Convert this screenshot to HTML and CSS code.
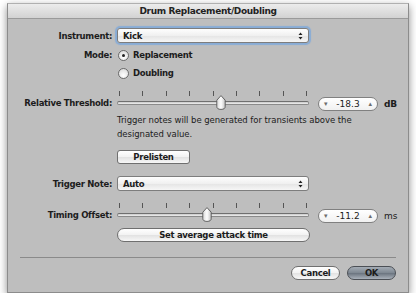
FILE: index.html
```html
<!DOCTYPE html>
<html lang="en">
<head>
    <meta charset="UTF-8">
    <title>Drum Replacement/Doubling</title>
    <link rel="stylesheet" href="styles.css">
</head>
<body>
    <div class="window">
        <header class="titlebar">Drum Replacement/Doubling</header>

        <main class="content">
            <!-- Instrument -->
            <div class="row row-instrument">
                <label class="label">Instrument:</label>
                <div class="popup focused">
                    <span class="popup-value">Kick</span>
                    <svg class="popup-arrows" width="5" height="8" viewBox="0 0 5 8">
                        <path d="M0.5 3 L2.5 0.5 L4.5 3 Z M0.5 5 L2.5 7.5 L4.5 5 Z" fill="#222"/>
                    </svg>
                </div>
            </div>

            <!-- Mode -->
            <div class="row row-mode">
                <label class="label">Mode:</label>
                <span class="radio checked"></span>
                <span class="radio-text">Replacement</span>
            </div>
            <div class="row row-mode2">
                <span class="label"></span>
                <span class="radio"></span>
                <span class="radio-text">Doubling</span>
            </div>

            <!-- Relative threshold -->
            <div class="row row-slider row-threshold">
                <label class="label">Relative Threshold:</label>
                <div class="slider">
                    <div class="ticks">
                        <i></i><i></i><i></i><i></i><i></i><i></i><i></i><i></i><i></i>
                    </div>
                    <div class="track"></div>
                    <svg class="knob" style="left: 99px" width="10" height="15" viewBox="0 0 10 15">
                        <defs>
                            <linearGradient id="kg1" x1="0" y1="0" x2="1" y2="0">
                                <stop offset="0" stop-color="#d8d8d8"/>
                                <stop offset="0.5" stop-color="#fdfdfd"/>
                                <stop offset="1" stop-color="#c4c4c4"/>
                            </linearGradient>
                        </defs>
                        <path d="M5 0.6 L9.2 5.2 V11.5 Q9.2 14.4 5 14.4 Q0.8 14.4 0.8 11.5 V5.2 Z" fill="url(#kg1)" stroke="#555" stroke-width="0.9"/>
                    </svg>
                </div>
                <div class="stepper">
                    <span class="step-arrow">&#9662;</span>
                    <span class="step-value">-18.3</span>
                    <span class="step-arrow">&#9652;</span>
                </div>
                <span class="unit unit-bold">dB</span>
            </div>

            <p class="help">Trigger notes will be generated for transients above the<br>designated value.</p>

            <div class="row row-prelisten">
                <span class="label"></span>
                <button class="btn btn-square">Prelisten</button>
            </div>

            <!-- Trigger note -->
            <div class="row row-trigger">
                <label class="label">Trigger Note:</label>
                <div class="popup">
                    <span class="popup-value">Auto</span>
                    <svg class="popup-arrows" width="5" height="8" viewBox="0 0 5 8">
                        <path d="M0.5 3 L2.5 0.5 L4.5 3 Z M0.5 5 L2.5 7.5 L4.5 5 Z" fill="#222"/>
                    </svg>
                </div>
            </div>

            <!-- Timing offset -->
            <div class="row row-slider row-timing">
                <label class="label">Timing Offset:</label>
                <div class="slider">
                    <div class="ticks">
                        <i></i><i></i><i></i><i></i><i></i><i></i><i></i><i></i><i></i>
                    </div>
                    <div class="track"></div>
                    <svg class="knob" style="left: 85px" width="10" height="15" viewBox="0 0 10 15">
                        <defs>
                            <linearGradient id="kg2" x1="0" y1="0" x2="1" y2="0">
                                <stop offset="0" stop-color="#d8d8d8"/>
                                <stop offset="0.5" stop-color="#fdfdfd"/>
                                <stop offset="1" stop-color="#c4c4c4"/>
                            </linearGradient>
                        </defs>
                        <path d="M5 0.6 L9.2 5.2 V11.5 Q9.2 14.4 5 14.4 Q0.8 14.4 0.8 11.5 V5.2 Z" fill="url(#kg2)" stroke="#555" stroke-width="0.9"/>
                    </svg>
                </div>
                <div class="stepper">
                    <span class="step-arrow">&#9662;</span>
                    <span class="step-value">-11.2</span>
                    <span class="step-arrow">&#9652;</span>
                </div>
                <span class="unit">ms</span>
            </div>

            <div class="row row-attack">
                <span class="label"></span>
                <button class="btn btn-pill btn-wide">Set average attack time</button>
            </div>

            <hr class="separator">

            <footer class="actions">
                <button class="btn btn-pill btn-action">Cancel</button>
                <button class="btn btn-pill btn-action btn-default">OK</button>
            </footer>
        </main>
    </div>
</body>
</html>
```

FILE: styles.css
```css
/* Global styles */
body {
    margin: 0;
    padding: 0;
    background: #fff;
    font-family: 'DejaVu Sans', sans-serif;
    font-size: 8.5px;
    color: #1c1c1c;
}

/* Window frame */
.window {
    position: relative;
    margin: 3px 0 0 7px;
    width: 400px;
    height: 288px;
    background: #bebebe;
    border: 1px solid #8c8c8c;
    border-top-color: #b0b0b0;
    box-shadow: 0px 3px 8px rgba(0, 0, 0, 0.45);
}

.titlebar {
    height: 14px;
    line-height: 14px;
    text-align: center;
    font-weight: bold;
    font-size: 9px;
    letter-spacing: -0.35px;
    color: #222;
    background: linear-gradient(#ececec, #d2d2d2);
    border-bottom: 1px solid #9a9a9a;
}

.content {
    padding-top: 9px;
}

/* Bold text shared by labels and controls */
.label,
.popup,
.radio-text,
.unit-bold,
.btn {
    font-weight: bold;
    letter-spacing: -0.3px;
}

/* Form rows */
.row {
    display: flex;
    align-items: center;
}

.label {
    width: 104px;
    margin-right: 5px;
    text-align: right;
    white-space: nowrap;
}

.row-instrument { height: 15px; }
.row-mode { height: 14px; margin-top: 5px; }
.row-mode2 { height: 14px; margin-top: 4px; }

/* Popup menus */
.popup {
    box-sizing: border-box;
    width: 192px;
    height: 15px;
    display: flex;
    align-items: center;
    justify-content: space-between;
    padding: 0 5px 0 5px;
    border: 1px solid #7d7d7d;
    border-radius: 3px;
    background: linear-gradient(#fefefe, #f0f0f0 50%, #e4e4e4 51%, #f6f6f6);
}

.popup.focused {
    box-shadow: 0 0 1px 2px #88acd6;
}

/* Radio buttons */
.radio {
    box-sizing: border-box;
    width: 11px;
    height: 11px;
    margin: 0 4px 0 1px;
    border: 1px solid #6a6a6a;
    border-radius: 50%;
    background: radial-gradient(circle at 50% 70%, #ffffff, #d6d6d6);
    display: flex;
    align-items: center;
    justify-content: center;
}

.radio.checked::after {
    content: "";
    width: 3px;
    height: 3px;
    border-radius: 50%;
    background: #222;
}

/* Sliders */
.row-slider {
    height: 22px;
    align-items: flex-end;
}

.row-threshold { margin-top: 9px; }
.row-timing { margin-top: 10px; }

.row-slider .label {
    line-height: 15px;
}

.slider {
    position: relative;
    width: 192px;
    height: 22px;
}

.ticks {
    display: flex;
    justify-content: space-between;
    padding: 2px 2px 0 2px;
    height: 5px;
}

.ticks i {
    width: 1px;
    height: 5px;
    background: #555;
}

.track {
    box-sizing: border-box;
    margin-top: 5px;
    height: 4px;
    border: 1px solid #8a8a8a;
    border-top-color: #6f6f6f;
    border-radius: 2px;
    background: linear-gradient(#c8c8c8, #efefef);
}

.knob {
    position: absolute;
    top: 6px;
}

/* Steppers */
.stepper {
    box-sizing: border-box;
    width: 60px;
    height: 14px;
    margin-left: 9px;
    display: flex;
    align-items: center;
    justify-content: space-between;
    padding: 0 5px;
    border: 1px solid #808080;
    border-radius: 7px;
    background: linear-gradient(#ffffff, #f1f1f1);
}

.step-arrow {
    font-size: 7px;
    color: #6d6d6d;
}

.step-value {
    flex: 1;
    text-align: center;
    font-size: 9px;
}

.unit {
    margin-left: 6px;
    line-height: 14px;
    font-size: 9px;
}

/* Help text */
.help {
    margin: 2px 0 0 109px;
    line-height: 14px;
    letter-spacing: -0.05px;
}

/* Buttons */
.btn {
    box-sizing: border-box;
    height: 14px;
    padding: 0;
    font-family: inherit;
    font-size: 8.5px;
    color: #1c1c1c;
    border: 1px solid #6f6f6f;
    background: linear-gradient(#ffffff, #f2f2f2 50%, #e2e2e2 51%, #f7f7f7);
}

.btn-square {
    width: 73px;
    border-radius: 3px;
}

.btn-pill {
    border-radius: 7px;
}

.btn-wide {
    width: 193px;
}

.row-prelisten { margin-top: 9px; }
.row-trigger { height: 15px; margin-top: 12px; }
.row-attack { margin-top: 5px; }

.separator {
    margin: 15px 12px 0 12px;
    border: 0;
    border-top: 1px solid #8a8a8a;
}

.actions {
    display: flex;
    justify-content: flex-end;
    gap: 7px;
    margin: 8px 12px 0 0;
}

.btn-action {
    width: 49px;
}

.btn-default {
    border-color: #4b4f55;
    background: linear-gradient(#a4acb5, #7d8791 50%, #6a737e 51%, #a9b1ba);
}
```
